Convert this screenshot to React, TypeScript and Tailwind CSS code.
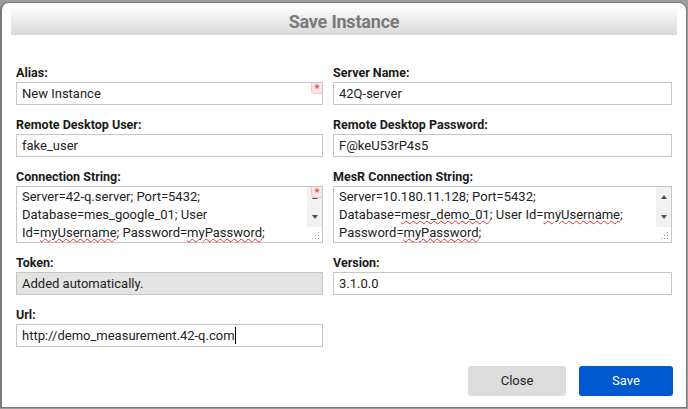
import React from "react";

const font = { fontFamily: "Roboto, 'Liberation Sans', Arial, sans-serif" };

function Required() {
  return (
    <div className="absolute right-0 top-0 w-[11px] h-[11px] bg-[#fde6e6] border-l border-b border-[#f3c4c4] rounded-bl-[4px] flex items-start justify-center">
      <span className="text-[#e04848] text-[11px] leading-[11px] font-bold">*</span>
    </div>
  );
}

function Label({ children }: { children: React.ReactNode }) {
  return <div className="text-[12.5px] leading-[14px] font-bold text-[#1a1a1a] mb-[2px]">{children}</div>;
}

function Input({
  value,
  required,
  disabled,
  caret,
}: {
  value: string;
  required?: boolean;
  disabled?: boolean;
  caret?: boolean;
}) {
  return (
    <div
      className={
        "relative h-[23px] border border-[#c6c6c6] flex items-center pl-[5px] text-[13px] text-[#222] " +
        (disabled ? "bg-[#e3e3e3]" : "bg-white")
      }
    >
      <span className="whitespace-nowrap">{value}</span>
      {caret && <span className="inline-block w-px h-[17px] bg-black" />}
      {required && <Required />}
    </div>
  );
}

function W({ children }: { children: React.ReactNode }) {
  return (
    <span className="underline decoration-wavy decoration-[#e03030] decoration-[1px] underline-offset-[1px]">
      {children}
    </span>
  );
}

function TextArea({ lines, required }: { lines: React.ReactNode[]; required?: boolean }) {
  return (
    <div className="relative h-[57px] border border-[#c6c6c6] bg-white flex">
      <div className="flex-1 pl-[5px] pt-[1px] text-[13px] leading-[18px] text-[#222]">
        {lines.map((l, i) => (
          <div key={i} className="whitespace-nowrap">
            {l}
          </div>
        ))}
      </div>
      <div className="w-[15px] flex flex-col">
        <div className="h-[40px] bg-[#f1f1f1] flex flex-col items-center justify-between py-[8px]">
          <div className="w-0 h-0 border-l-[3.5px] border-r-[3.5px] border-b-[4px] border-l-transparent border-r-transparent border-b-[#505050]" />
          <div className="w-0 h-0 border-l-[3.5px] border-r-[3.5px] border-t-[4px] border-l-transparent border-r-transparent border-t-[#505050]" />
        </div>
        <div className="flex-1 relative">
          <svg className="absolute right-[2px] bottom-[2px]" width="9" height="9" viewBox="0 0 9 9">
            {[
              [7, 1],
              [4, 4],
              [7, 4],
              [1, 7],
              [4, 7],
              [7, 7],
            ].map(([x, y], i) => (
              <rect key={i} x={x} y={y} width="1" height="1" fill="#9a9a9a" />
            ))}
          </svg>
        </div>
      </div>
      {required && <Required />}
    </div>
  );
}

export default function App() {
  return (
    <div className="w-[688px] h-[409px] bg-[#9c9c9c] pt-[2px]" style={font}>
      <div className="w-[687px] h-[406px] bg-white border border-[#7a7a7a] border-l-2 rounded-t-[8px] relative flex flex-col">
        <div className="mx-[9px] mt-[2px] h-[30px] bg-gradient-to-b from-white to-[#d9d9d9] rounded-t-[6px] flex items-center justify-center pt-[2px]">
          <span className="text-[18px] font-bold text-[#7a7a7a] tracking-[-0.2px]">Save Instance</span>
        </div>
        <div className="pl-[14px] pt-[31px] flex flex-col gap-[13px]">
          <div className="grid grid-cols-[307px_339px] gap-x-[10px]">
            <div>
              <Label>Alias:</Label>
              <Input value="New Instance" required />
            </div>
            <div>
              <Label>Server Name:</Label>
              <Input value="42Q-server" />
            </div>
          </div>
          <div className="grid grid-cols-[307px_339px] gap-x-[10px]">
            <div>
              <Label>Remote Desktop User:</Label>
              <Input value="fake_user" />
            </div>
            <div>
              <Label>Remote Desktop Password:</Label>
              <Input value="F@keU53rP4s5" />
            </div>
          </div>
          <div className="grid grid-cols-[307px_339px] gap-x-[10px]">
            <div>
              <Label>Connection String:</Label>
              <TextArea
                required
                lines={[
                  "Server=42-q.server; Port=5432;",
                  "Database=mes_google_01; User",
                  <>
                    Id=<W>myUsername</W>; Password=<W>myPassword</W>;
                  </>,
                ]}
              />
            </div>
            <div>
              <Label>MesR Connection String:</Label>
              <TextArea
                lines={[
                  "Server=10.180.11.128; Port=5432;",
                  <>
                    Database=<W>mesr_demo_01</W>; User Id=<W>myUsername</W>;
                  </>,
                  <>
                    Password=<W>myPassword</W>;
                  </>,
                ]}
              />
            </div>
          </div>
          <div className="grid grid-cols-[307px_339px] gap-x-[10px]">
            <div>
              <Label>Token:</Label>
              <Input value="Added automatically." disabled />
            </div>
            <div>
              <Label>Version:</Label>
              <Input value="3.1.0.0" />
            </div>
          </div>
          <div className="grid grid-cols-[307px_339px] gap-x-[10px]">
            <div>
              <Label>Url:</Label>
              <Input value="http://demo_measurement.42-q.com" caret />
            </div>
            <div />
          </div>
        </div>
        <div className="flex justify-end gap-[13px] pr-[13px] mt-[19px]">
          <button className="w-[98px] h-[30px] rounded-[3px] bg-[#dcdcdc] text-[13px] text-[#222]">Close</button>
          <button className="w-[94px] h-[30px] rounded-[3px] bg-[#0058cf] text-[13px] text-white">Save</button>
        </div>
      </div>
    </div>
  );
}
